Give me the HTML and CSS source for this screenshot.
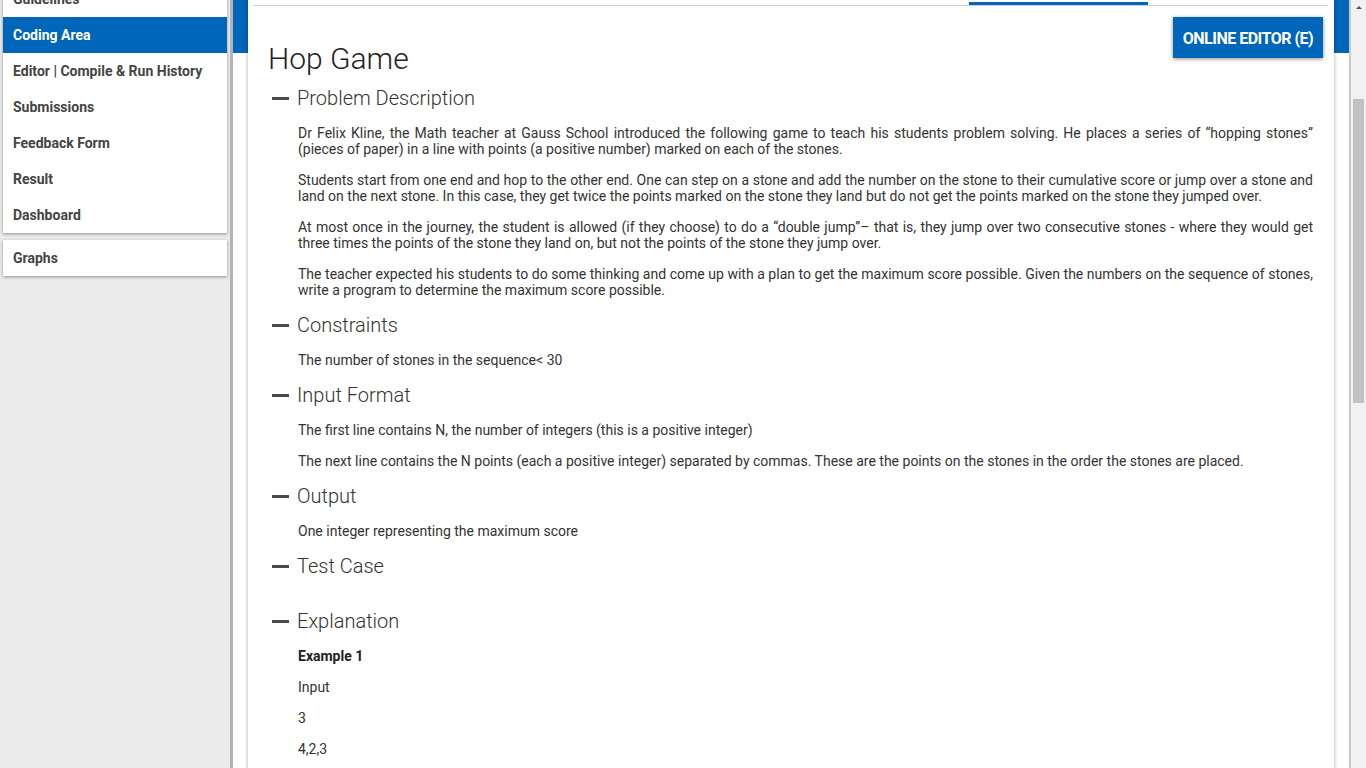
FILE: index.html
```html
<!DOCTYPE html>
<html lang="en">
<head>
<meta charset="utf-8">
<title>Hop Game</title>
<link rel="stylesheet" href="styles.css">
</head>
<body>
<div class="app">
  <aside class="sidebar">
    <nav class="menu menu-main">
      <a class="item" href="#">Guidelines</a>
      <a class="item active" href="#">Coding Area</a>
      <a class="item" href="#">Editor | Compile &amp; Run History</a>
      <a class="item" href="#">Submissions</a>
      <a class="item" href="#">Feedback Form</a>
      <a class="item" href="#">Result</a>
      <a class="item" href="#">Dashboard</a>
    </nav>
    <nav class="menu menu-extra">
      <a class="item" href="#">Graphs</a>
    </nav>
  </aside>

  <main class="main">
    <article class="card">
      <div class="tabs">
        <div class="tab"></div>
        <div class="tab"></div>
        <div class="tab"></div>
        <div class="tab"></div>
        <div class="tab active"></div>
        <div class="tab"></div>
      </div>

      <header class="card-head">
        <h1 class="title">Hop Game</h1>
        <button class="btn-editor" type="button">ONLINE EDITOR (E)</button>
      </header>

      <section class="section">
        <h2 class="sec-title"><span class="dash"></span>Problem Description</h2>
        <div class="sec-body">
          <p>Dr Felix Kline, the Math teacher at Gauss School introduced the following game to teach his students problem solving. He places a series of “hopping stones” (pieces of paper) in a line with points (a positive number) marked on each of the stones.</p>
          <p>Students start from one end and hop to the other end. One can step on a stone and add the number on the stone to their cumulative score or jump over a stone and land on the next stone. In this case, they get twice the points marked on the stone they land but do not get the points marked on the stone they jumped over.</p>
          <p>At most once in the journey, the student is allowed (if they choose) to do a “double jump”– that is, they jump over two consecutive stones - where they would get three times the points of the stone they land on, but not the points of the stone they jump over.</p>
          <p>The teacher expected his students to do some thinking and come up with a plan to get the maximum score possible. Given the numbers on the sequence of stones, write a program to determine the maximum score possible.</p>
        </div>
      </section>

      <section class="section">
        <h2 class="sec-title"><span class="dash"></span>Constraints</h2>
        <div class="sec-body">
          <p>The number of stones in the sequence&lt; 30</p>
        </div>
      </section>

      <section class="section">
        <h2 class="sec-title"><span class="dash"></span>Input Format</h2>
        <div class="sec-body">
          <p>The first line contains N, the number of integers (this is a positive integer)</p>
          <p>The next line contains the N points (each a positive integer) separated by commas. These are the points on the stones in the order the stones are placed.</p>
        </div>
      </section>

      <section class="section">
        <h2 class="sec-title"><span class="dash"></span>Output</h2>
        <div class="sec-body">
          <p>One integer representing the maximum score</p>
        </div>
      </section>

      <section class="section">
        <h2 class="sec-title"><span class="dash"></span>Test Case</h2>
        <div class="sec-body sec-empty"></div>
      </section>

      <section class="section">
        <h2 class="sec-title"><span class="dash"></span>Explanation</h2>
        <div class="sec-body">
          <p><strong>Example 1</strong></p>
          <p>Input</p>
          <p>3</p>
          <p>4,2,3</p>
        </div>
      </section>
    </article>
  </main>

  <div class="scrollbar">
    <div class="sb-arrow"><span class="sb-tri"></span></div>
    <div class="sb-thumb"></div>
  </div>
</div>
</body>
</html>
```

FILE: styles.css
```css
html, body {
  margin: 0;
  height: 100%;
  overflow: hidden;
}

body {
  font-family: Roboto, "Noto Sans", "Liberation Sans", sans-serif;
  color: #333;
  background: #fff;
}

.app {
  display: flex;
  height: 100vh;
}

/* ---------- sidebar ---------- */
.sidebar {
  flex: none;
  width: 233px;
  box-sizing: border-box;
  padding: 0 3px;
  background: #ebebeb;
  border-right: 3px solid #b4b4b4;
  overflow: hidden;
}

.menu {
  background: #fff;
  box-shadow: 0 1px 3px rgba(0, 0, 0, 0.4);
}

.menu-main {
  margin-top: -19px;
}

.menu-extra {
  margin-top: 7px;
}

.item {
  display: block;
  height: 36px;
  line-height: 36px;
  padding-left: 10px;
  font-size: 14px;
  font-weight: 700;
  color: #444;
  text-decoration: none;
  white-space: nowrap;
}

.item.active {
  background: #0066b9;
  color: #fff;
}

/* ---------- main ---------- */
.main {
  flex: 1;
  min-width: 0;
  padding: 0 15px;
  background: linear-gradient(#0066b9 0, #0066b9 53px, #fff 53px);
  border-right: 2px solid #c9c9c9;
  overflow: hidden;
}

.card {
  background: #fff;
  box-shadow: 0 0 4px rgba(0, 0, 0, 0.35);
  min-height: 900px;
}

.tabs {
  display: flex;
  margin: 0 6px 0 5px;
  border-bottom: 1px solid #cfcfcf;
}

.tab {
  width: 179px;
  height: 5px;
}

.tab.active {
  box-shadow: inset 0 -3px 0 #0066b9;
}

.card-head {
  display: flex;
  justify-content: space-between;
  align-items: flex-start;
  padding: 0 11px 0 20px;
}

.title {
  margin: 35px 0 8px;
  font-size: 30px;
  line-height: 36px;
  font-weight: 300;
  color: #222;
}

.btn-editor {
  margin-top: 11px;
  width: 150px;
  height: 41px;
  border: 0;
  padding: 2px 0 0;
  background: #0066b9;
  color: #fff;
  font-family: Roboto, "Noto Sans", "Liberation Sans", sans-serif;
  font-size: 16px;
  font-weight: 700;
  letter-spacing: -0.5px;
  box-shadow: 0 1px 4px rgba(0, 0, 0, 0.45);
  cursor: pointer;
}

.section {
  padding: 0 21px 0 24px;
}

.sec-title {
  display: flex;
  align-items: center;
  gap: 8px;
  margin: 0 0 13px;
  font-size: 20px;
  line-height: 26px;
  font-weight: 300;
  color: #333;
}

.dash {
  flex: none;
  width: 17px;
  height: 3px;
  background: #4a4a4a;
}

.sec-body {
  padding-left: 26px;
}

.sec-body p {
  margin: 0 0 14px;
  padding-top: 1px;
  font-size: 14px;
  line-height: 16px;
  text-align: justify;
  color: #333;
}

.sec-body strong {
  font-weight: 700;
  color: #222;
}

.sec-empty {
  height: 16px;
}

/* ---------- scrollbar ---------- */
.scrollbar {
  flex: none;
  width: 15px;
  background: #f1f1f1;
  display: flex;
  flex-direction: column;
}

.sb-arrow {
  height: 17px;
  display: flex;
  justify-content: center;
  align-items: center;
}

.sb-tri {
  width: 0;
  height: 0;
  border-left: 3px solid transparent;
  border-right: 3px solid transparent;
  border-bottom: 3px solid #505050;
  margin-top: -2px;
}

.sb-thumb {
  margin: 82px 2px 0;
  height: 304px;
  background: #c1c1c1;
}
```
